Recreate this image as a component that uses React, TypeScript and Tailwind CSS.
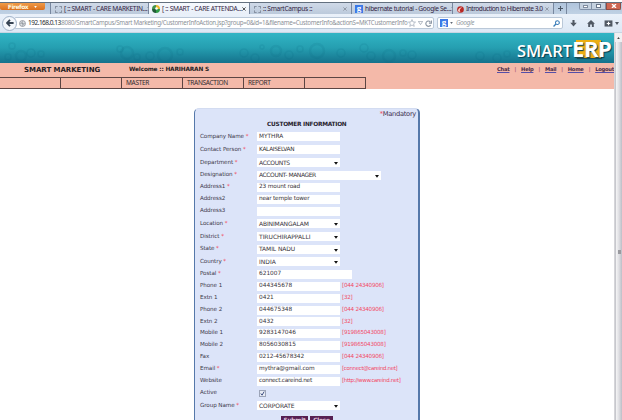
import React from "react";

type Row = {
  label: string;
  req?: boolean;
  kind?: "input" | "select" | "check";
  value?: string;
  hint?: string;
  h: string;
  w?: string;
  t?: string;
};

const rows: Row[] = [
  { label: "Company Name", req: true, value: "MYTHRA", h: "h-[13px]" },
  { label: "Contact Person", req: true, value: "KALAISELVAN", h: "h-[13px]", t: "tracking-[-0.3px]" },
  { label: "Department", req: true, kind: "select", value: "ACCOUNTS", h: "h-[13px]", t: "tracking-[-0.35px]" },
  { label: "Designation", req: true, kind: "select", value: "ACCOUNT- MANAGER", h: "h-[12px]", w: "w-[124px]", t: "tracking-[-0.42px]" },
  { label: "Address1", req: true, value: "23 mount road", h: "h-[12px]", t: "tracking-[-0.15px]" },
  { label: "Address2", value: "near temple tower", h: "h-[12px]", t: "tracking-[-0.2px]" },
  { label: "Address3", value: "", h: "h-[12px]" },
  { label: "Location", req: true, kind: "select", value: "ABINIMANGALAM", h: "h-[13px]", t: "tracking-[-0.13px]" },
  { label: "District", req: true, kind: "select", value: "TIRUCHIRAPPALLI", h: "h-[13px]", t: "tracking-[-0.03px]" },
  { label: "State", req: true, kind: "select", value: "TAMIL NADU", h: "h-[12px]", t: "tracking-[-0.1px]" },
  { label: "Country", req: true, kind: "select", value: "INDIA", h: "h-[13px]" },
  { label: "Postal", req: true, value: "621007", h: "h-[12px]", w: "w-[95px]" },
  { label: "Phone 1", value: "044345678", hint: "[044 24340906]", h: "h-[12px]" },
  { label: "Extn 1", value: "0421", hint: "[32]", h: "h-[12px]" },
  { label: "Phone 2", value: "044675348", hint: "[044 24340906]", h: "h-[12px]" },
  { label: "Extn 2", value: "0432", hint: "[32]", h: "h-[11px]" },
  { label: "Mobile 1", value: "9283147046", hint: "[919865043008]", h: "h-[12px]" },
  { label: "Mobile 2", value: "8056030815", hint: "[919865043008]", h: "h-[12px]" },
  { label: "Fax", value: "0212-45678342", hint: "[044 24340906]", h: "h-[12px]", t: "tracking-[-0.1px]" },
  { label: "Email", req: true, value: "mythra@gmail.com", hint: "[connect@careind.net]", h: "h-[12px]", t: "tracking-[-0.1px]" },
  { label: "Website", value: "connect.careind.net", hint: "[http://www.careind.net]", h: "h-[12px]", t: "tracking-[-0.26px]" },
  { label: "Active", kind: "check", h: "h-[12px]" },
  { label: "Group Name", req: true, kind: "select", value: "CORPORATE", h: "h-[13px]", t: "tracking-[-0.1px]" },
];

function Field({ row }: { row: Row }) {
  if (row.kind === "check") {
    return (
      <span className="ml-[2px] flex h-[7px] w-[7px] items-center justify-center border border-[#9ca4b8] bg-[#e8ecf4]">
        <svg viewBox="0 0 6 6" className="h-[5px] w-[5px] shrink-0">
          <path d="M1 3l1.5 2L5 .7" fill="none" stroke="#2f3f78" strokeWidth="1.1" />
        </svg>
      </span>
    );
  }
  const select = row.kind === "select";
  return (
    <>
      <span className={`flex h-[9px] shrink-0 items-center justify-between bg-white pl-[2px] text-[#38343c] ${row.w ?? "w-[83px]"} ${select ? "pr-[2px] text-[6px]" : "text-[5.8px]"}`}>
        <span className={row.t ?? ""}>{row.value}</span>
        {select && (
          <svg viewBox="0 0 4 3" className="mt-[2px] h-[3px] w-[4px]">
            <path d="M0 0h4L2 2.8z" fill="#111" />
          </svg>
        )}
      </span>
      {row.hint && (
        <span className={`ml-[2px] text-[#f34a66] ${/[a-z]/.test(row.hint) ? "text-[5.5px] tracking-[-0.36px]" : "text-[5.6px] tracking-[-0.25px]"}`}>
          {row.hint}
        </span>
      )}
    </>
  );
}

function Tab({ title, icon, width, active, text }: { title: string; icon: React.ReactNode; width: string; active?: boolean; text: string }) {
  return (
    <div className={`flex h-[12px] shrink-0 items-center border-r border-[#77879f] pl-[3px] pr-[4px] ${width} ${active ? "bg-linear-to-b from-[#f6f9fd] to-[#e7eef8]" : "bg-linear-to-b from-[#d0dae8] to-[#b9c8da]"}`}>
      <span className="flex h-[8px] w-[8px] shrink-0 items-center justify-center">{icon}</span>
      <span className={`ml-[2px] flex-1 text-[#33233f] ${text}`}>{title}</span>
      <svg viewBox="0 0 4 4" className="h-[4px] w-[4px] shrink-0">
        <path d="M.4.4l3.2 3.2M3.6.4L.4 3.6" stroke={active ? "#444" : "#8b93a0"} strokeWidth=".9" />
      </svg>
    </div>
  );
}

const BlankIcon = () => <span className="h-[7px] w-[7px] border border-dashed border-[#8792a3]" />;

const GoogleIcon = () => (
  <span className="flex h-[8px] w-[8px] shrink-0 items-center justify-center bg-[#3b78e7] font-['Liberation_Serif',serif] text-[9px] font-bold leading-[8px] text-white">
    <span className="-mt-[3px]">g</span>
  </span>
);

const rings = [
  [8, 24, 3], [12, 13, 3], [21, 23, 5], [31, 20, 4], [41, 21, 3], [120, 16, 3], [127, 20, 6], [137, 24, 3],
  [150, 23, 4], [165, 22, 7], [180, 19, 3], [244, 20, 4], [255, 25, 4], [262, 14, 2], [276, 18, 5], [289, 22, 4],
  [300, 16, 3], [317, 18, 7], [341, 20, 4], [364, 15, 4], [371, 23, 4], [389, 23, 6], [403, 20, 3], [412, 22, 4],
  [480, 23, 4], [497, 25, 4], [507, 21, 3],
];

function Banner() {
  return (
    <div className="relative h-[30px] shrink-0 overflow-hidden bg-linear-to-b from-[#31b5c5] via-[#259eb0] to-[#15728c]">
      <svg className="absolute inset-0 h-[30px] w-[614px]" viewBox="0 0 614 30">
        {rings.map(([x, y, r], i) => (
          <circle key={i} cx={x} cy={y} r={r} fill="none" stroke="#0c627b" strokeWidth={r > 4 ? 2.4 : 1.5} opacity=".12" />
        ))}
      </svg>
      <div className="absolute left-[576px] top-[7px] h-[18px] w-[25px] bg-[#ecae13] shadow-[1px_1px_1px_#174c5d]" />
      <div className="absolute left-[517px] top-[3px] flex items-baseline font-['Open_Sans',sans-serif] leading-[24px] text-white [text-shadow:1px_1px_1px_#063e52]">
        <span className="w-[55px] text-[16.5px] font-semibold">SMART</span>
        <span className="text-[22px] font-bold tracking-[-0.4px]">ERP</span>
      </div>
    </div>
  );
}

export default function App() {
  return (
    <div className="flex h-[420px] w-[622px] flex-col overflow-hidden whitespace-nowrap bg-white pt-[2px] font-['DejaVu_Sans',sans-serif] leading-none">
      <div className="flex h-[12px] shrink-0 border-t border-[#63707f] bg-linear-to-b from-[#afc4dc] to-[#c0d1e4]">
        <div className="mr-[5px] flex h-[7px] w-[45px] shrink-0 items-center justify-center gap-[6px] rounded-b-[2px] bg-linear-to-b from-[#ef9b48] to-[#dc701b] text-[6px] font-bold text-[#fff5dc]">
          <span className="tracking-[-0.5px]">Firefox</span>
          <svg viewBox="0 0 4 3" className="h-[2px] w-[3px]"><path d="M0 0h4L2 3z" fill="white" /></svg>
        </div>
        <div className="flex shrink-0 border-l border-[#77879f] font-['Noto_Sans',sans-serif]">
          <Tab width="w-[98px]" text="text-[6.6px] tracking-[-0.32px]" title="[ :: SMART - CARE MARKETIN..." icon={<BlankIcon />} />
          <Tab width="w-[101px]" active text="text-[6.6px] tracking-[-0.3px]" title="[ :: SMART - CARE ATTENDA..." icon={
            <svg viewBox="0 0 8 8" className="h-[8px] w-[8px]">
              <path d="M4 4V0a4 4 0 0 1 4 4z" fill="#e9b72a" />
              <path d="M4 4h4a4 4 0 0 1-4 4z" fill="#2e9c47" />
              <path d="M4 4v4a4 4 0 0 1-4-4z" fill="#225b38" />
              <path d="M4 4H0a4 4 0 0 1 4-4z" fill="#43934d" />
              <circle cx="4.5" cy="3.5" r="1.3" fill="white" />
            </svg>
          } />
          <Tab width="w-[102px]" text="text-[6.6px] tracking-[-0.3px]" title=":: SmartCampus ::" icon={<BlankIcon />} />
          <Tab width="w-[101px]" text="text-[6.6px] tracking-[-0.32px]" title="hibernate tutorial - Google Se..." icon={<GoogleIcon />} />
          <Tab width="w-[101px]" text="text-[6.6px] tracking-[-0.48px]" title="Introduction to Hibernate 3.0" icon={
            <svg viewBox="0 0 8 8" className="h-[7px] w-[7px]">
              <circle cx="4" cy="4" r="3.8" fill="#b92724" />
              <path d="M1 6c0-3 3-5 5-4C3 3 3 5 4 7z" fill="#f6c5bb" />
            </svg>
          } />
          <div className="flex w-[13px] items-center justify-center border-r border-[#77879f]">
            <svg viewBox="0 0 6 6" className="h-[5px] w-[5px]"><path d="M3 0v6M0 3h6" stroke="#4c5868" strokeWidth="1.3" /></svg>
          </div>
        </div>
        <div className="ml-auto mr-[1px] flex h-[7px] shrink-0">
          <span className="flex w-[13px] items-center justify-center rounded-bl-[2px] border border-t-0 border-[#8191a8] bg-[#c4d1df]"><span className="h-[3px] w-[5px] border border-[#7f8c9f] bg-white" /></span>
          <span className="flex w-[14px] items-center justify-center border border-l-0 border-t-0 border-[#8191a8] bg-[#c4d1df]"><span className="h-[4px] w-[5px] border border-[#69768a] bg-white" /></span>
          <span className="flex w-[15px] items-center justify-center rounded-br-[2px] border border-t-0 border-[#8f4c43] bg-[#ce6652]">
            <svg viewBox="0 0 6 4" className="h-[4px] w-[6px]"><path d="M1 0l4 4M5 0L1 4" stroke="white" strokeWidth="1.4" /></svg>
          </span>
        </div>
      </div>

      <div className="flex h-[19px] shrink-0 items-center border-b border-[#c7d5e3] bg-linear-to-b from-[#eaf1fa] to-[#dce8f5] font-['Noto_Sans',sans-serif]">
        <span className="z-10 ml-[2px] flex h-[15px] w-[15px] shrink-0 items-center justify-center rounded-full border border-[#9fb1c8] bg-[#f3f7fc]">
          <svg viewBox="0 0 8 8" className="h-[8px] w-[8px]"><path d="M4 .8L1 4l3 3.2M1 4h6.6" fill="none" stroke="#374454" strokeWidth="1.8" /></svg>
        </span>
        <div className="-ml-[3px] flex h-[12px] w-[420px] shrink-0 items-center rounded-[2px] border border-[#bac8d8] bg-white pl-[4px] text-[#8d9198]">
          <svg viewBox="0 0 8 8" className="mr-[2px] h-[7px] w-[7px] shrink-0"><circle cx="4" cy="4" r="3.4" fill="#dfe2e5" stroke="#92979e" /><path d="M1 4h6M4 1v6M2 2l4 4" stroke="#92979e" strokeWidth=".7" /></svg>
          <span className="w-[32px] shrink-0 text-[6.5px] tracking-[-0.5px] text-[#25282e]">192.168.0.13</span>
          <span className="text-[6.2px] tracking-[-0.3px]">:8080/SmartCampus/Smart Marketing/CustomerInfoAction.jsp?group=0&amp;id=1&amp;filename=CustomerInfo&amp;actionS=MKTCustomerInfo</span>
          <div className="ml-auto mr-[3px] flex shrink-0 items-center gap-[2px]">
            <svg viewBox="0 0 10 10" className="h-[8px] w-[8px]"><path d="M5 .7l1.2 3 3.2.2L7 6l.8 3.2L5 7.5 2.2 9.2 3 6 .6 3.9l3.2-.2z" fill="white" stroke="#a7b0bd" /></svg>
            <svg viewBox="0 0 5 4" className="h-[4px] w-[5px]"><path d="M.3.4h4.4L2.5 3.6z" fill="white" stroke="#929cab" strokeWidth=".7" /></svg>
            <svg viewBox="0 0 8 8" className="h-[7px] w-[7px]"><path d="M6.5 5.8A3 3 0 1 1 6 2M7.3.7v2.8H4.5" fill="none" stroke="#8994a2" strokeWidth="1.3" /></svg>
          </div>
        </div>
        <div className="ml-[3px] flex h-[12px] w-[126px] shrink-0 items-center rounded-[2px] border border-[#bac8d8] bg-white pl-[2px] pr-[2px]">
          <GoogleIcon />
          <svg viewBox="0 0 4 3" className="ml-[2px] h-[2px] w-[3px]"><path d="M0 0h4L2 3z" fill="#606874" /></svg>
          <span className="ml-[3px] flex-1 text-[6.5px] italic tracking-[-0.4px] text-[#949aa3]">Google</span>
          <svg viewBox="0 0 8 8" className="h-[7px] w-[7px]"><circle cx="5" cy="3" r="2.2" fill="none" stroke="#397cb8" strokeWidth="1.2" /><path d="M3.4 4.6L.6 7.4" stroke="#397cb8" strokeWidth="1.5" /></svg>
        </div>
        <div className="ml-[7px] flex flex-1 items-center text-[#515964]">
          <svg viewBox="0 0 8 8" className="h-[7px] w-[7px]"><path d="M2.8 0h2.4v3.2h2.5L4 7.5.3 3.2h2.5z" fill="currentColor" /></svg>
          <svg viewBox="0 0 9 8" className="ml-[10px] h-[7px] w-[8px]"><path d="M4.5 0L9 4.2H7.7V8H5.5V5.2h-2V8H1.3V4.2H0z" fill="currentColor" /></svg>
          <svg viewBox="0 0 9 8" className="ml-[9px] h-[7px] w-[9px]"><path d="M0 .5h9v7H0z" fill="currentColor" /><path d="M4.5 2v4M2.5 4h4" stroke="white" strokeWidth="1.3" /></svg>
          <svg viewBox="0 0 4 3" className="ml-[2px] h-[3px] w-[4px]"><path d="M0 0h4L2 3z" fill="currentColor" /></svg>
        </div>
      </div>

      <div className="flex min-h-0 flex-1">
        <div className="flex w-[614px] shrink-0 flex-col overflow-hidden">
          <Banner />
          <div className="h-[26px] shrink-0 bg-[#f4b9a9]">
            <div className="flex h-[14px] items-center text-[#241d24]">
              <span className="ml-[24px] w-[105px] shrink-0 text-[7px] font-bold tracking-[-0.03px]">SMART MARKETING</span>
              <span className="w-[368px] shrink-0 text-[5.8px] font-bold tracking-[-0.16px]">Welcome :: HARIHARAN S</span>
              <div className="flex w-[117px] shrink-0 justify-between text-[5.2px] font-bold tracking-[-0.25px] text-[#4a2946]">
                <span className="underline decoration-[#554fa8]">Chat</span><span className="font-normal text-[#8a3568]">|</span>
                <span className="underline decoration-[#554fa8]">Help</span><span className="font-normal text-[#8a3568]">|</span>
                <span className="underline decoration-[#554fa8]">Mail</span><span className="font-normal text-[#8a3568]">|</span>
                <span className="underline decoration-[#554fa8]">Home</span><span className="font-normal text-[#8a3568]">|</span>
                <span className="underline decoration-[#554fa8]">Logout</span>
              </div>
            </div>
            <div className="flex h-[12px] w-[366px] border-y border-r border-[#5c4543] font-['Noto_Sans',sans-serif] text-[6.5px] tracking-[-0.3px] text-[#332c30]">
              {["", "", "MASTER", "TRANSACTION", "REPORT", ""].map((m, i) => (
                <span key={i} className={`flex flex-1 items-center pl-[4px] ${i ? "border-l border-[#5c4543]" : ""}`}>{m}</span>
              ))}
            </div>
          </div>

          <div className="ml-[194px] mt-[19px] h-[330px] w-[226px] shrink-0 rounded-t-[5px] border-l border-r-2 border-t border-l-[#5578aa] border-r-[#5578aa] border-t-[#d3dcf1] bg-[#dce4f9] pl-[5px]">
            <div className="flex h-[11px] items-center justify-end pr-[2px] text-[6.7px] tracking-[-0.3px] text-[#41304f]">
              <span className="text-[#f34050]">*</span>Mandatory
            </div>
            <div className="h-[10px] pl-[67px] pt-[2px] text-[5.8px] font-bold tracking-[-0.24px] text-[#26222d]">CUSTOMER INFORMATION</div>
            {rows.map((r) => (
              <div key={r.label} className={`flex items-center ${r.h}`}>
                <span className="w-[57px] shrink-0 text-[5.6px] tracking-[-0.08px] text-[#40394a]">
                  {r.label}
                  {r.req && <span className="text-[#f34050]"> *</span>}
                </span>
                <Field row={r} />
              </div>
            ))}
            <div className="ml-[81px] mt-[4px] flex gap-[2px] text-[5.8px] font-bold tracking-[-0.2px] text-[#e4cae0]">
              <span className="flex h-[8px] w-[27px] items-center justify-center bg-[#562052] pt-px">Submit</span>
              <span className="flex h-[8px] w-[23px] items-center justify-center bg-[#562052] pt-px">Close</span>
            </div>
          </div>
        </div>
        <div className="flex w-[8px] flex-col items-center border-l border-[#d5d5d9] bg-linear-to-r from-[#efeff1] to-[#d0d0d4]">
          <div className="flex h-[9px] w-full items-center justify-center bg-[#f0f0f2]">
            <svg viewBox="0 0 4 3" className="h-[2px] w-[3px]"><path d="M0 3h4L2 0z" fill="#444" /></svg>
          </div>
          <div className="flex w-full flex-1 flex-col items-center border-l border-[#c7c8cd] bg-linear-to-r from-[#f5f5f6] via-[#dedee2] to-[#bdbec7] pt-[208px]">
            <span className="h-[4px] w-[3px] bg-[#9a9a9f]" />
          </div>
        </div>
      </div>
    </div>
  );
}
